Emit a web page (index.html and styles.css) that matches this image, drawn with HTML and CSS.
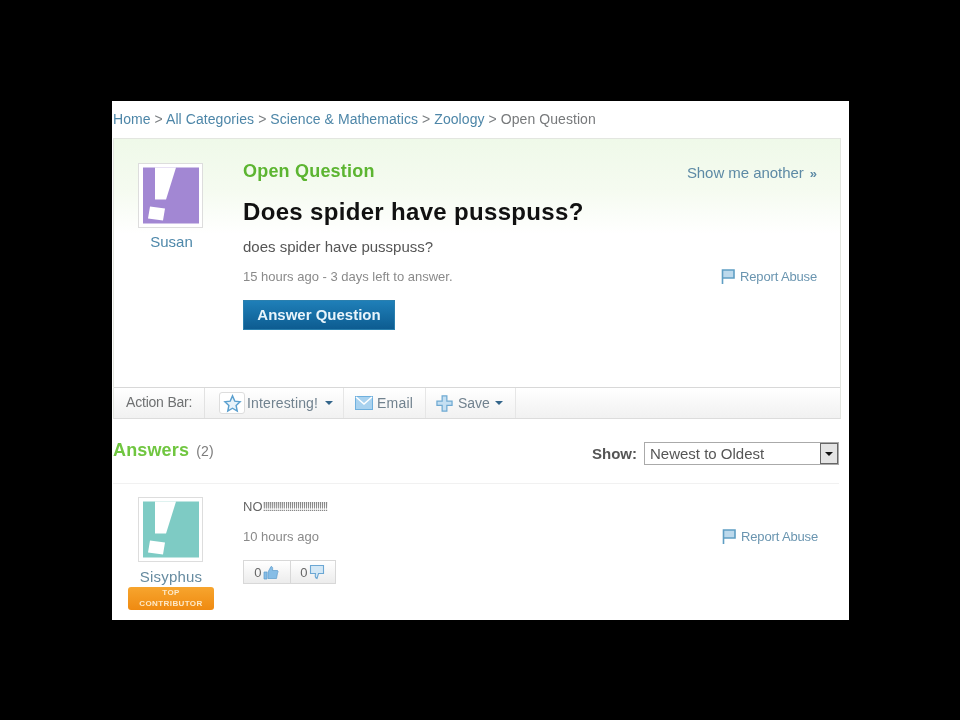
FILE: index.html
```html
<!DOCTYPE html>
<html lang="en">
<head>
<meta charset="utf-8">
<title>Does spider have pusspuss?</title>
<link rel="stylesheet" href="styles.css">
</head>
<body>
<main class="frame">
  <nav class="crumbs"><a>Home</a> &gt; <a>All Categories</a> &gt; <a>Science &amp; Mathematics</a> &gt; <a>Zoology</a> &gt; <span>Open Question</span></nav>

  <section class="qbox">
    <div class="qbody">
      <div class="user user-q">
        <div class="avatar">
          <svg viewBox="0 0 56 56" width="56" height="57"><rect width="56" height="56" fill="#a287d3"/><path d="M12 0H33L23 32H12Z" fill="#fff"/><path d="M7 39L22 41L20 53L5 51Z" fill="#fff"/></svg>
        </div>
        <a class="uname">Susan</a>
      </div>
      <div class="qmain">
        <div class="qtop"><h2 class="status">Open Question</h2><a class="another">Show me another <span class="chev">»</span></a></div>
        <h1 class="title">Does spider have pusspuss?</h1>
        <p class="desc">does spider have pusspuss?</p>
        <div class="metarow">
          <span class="meta">15 hours ago - 3 days left to answer.</span>
          <a class="report"><svg viewBox="0 0 14 15" width="14" height="15"><path d="M1.500 15V1H13V9H1.500" fill="#bcd9ec" stroke="#5f9ec4" stroke-width="1.600"/></svg>Report Abuse</a>
        </div>
        <a class="answer-btn">Answer Question</a>
      </div>
    </div>
    <div class="actionbar">
      <span class="ab-label">Action Bar:</span>
      <a class="ab-item ab-int"><span class="starbox"><svg viewBox="0 0 20 20" width="19" height="19"><path d="M10 2L12.400 7.500L18 8.200L13.800 12L15 18L10 15L5 18L6.200 12L2 8.200L7.600 7.500Z" fill="#e8f3fa" stroke="#5ba0cf" stroke-width="1.500"/></svg></span>Interesting!<i class="caret"></i></a>
      <a class="ab-item ab-email"><svg viewBox="0 0 18 14" width="18" height="14"><rect x=".5" y=".5" width="17" height="13" fill="#a9d2ef" stroke="#6fb0de"/><path d="M1 1L9 8L17 1" fill="none" stroke="#fff" stroke-width="1.500"/></svg>Email</a>
      <a class="ab-item ab-save"><svg viewBox="0 0 18 18" width="17" height="17"><path d="M6.500 1H11.500V6.500H17V11H11.500V17H6.500V11H1V6.500H6.500Z" fill="#c4dff2" stroke="#6ea9d2" stroke-width="1.300"/></svg>Save<i class="caret caret-save"></i></a>
    </div>
  </section>

  <header class="ans-head">
    <h2 class="ans-title">Answers <span class="count">(2)</span></h2>
    <div class="show">
      <label class="show-label">Show:</label>
      <div class="select"><span>Newest to Oldest</span><span class="sel-btn"><i class="sel-caret"></i></span></div>
    </div>
  </header>

  <article class="answer">
    <div class="user user-a">
      <div class="avatar avatar-a">
        <svg viewBox="0 0 56 56" width="56" height="57"><rect width="56" height="56" fill="#7ecbc4"/><path d="M12 0H33L23 32H12Z" fill="#fff"/><path d="M7 39L22 41L20 53L5 51Z" fill="#fff"/></svg>
      </div>
      <a class="uname uname-a">Sisyphus</a>
      <span class="badge">TOP<br>CONTRIBUTOR</span>
    </div>
    <div class="amain">
      <p class="atext">NO<span class="bangs">!!!!!!!!!!!!!!!!!!!!!!!!!!!!!!!!</span></p>
      <div class="metarow metarow-a">
        <span class="meta">10 hours ago</span>
        <a class="report"><svg viewBox="0 0 14 15" width="14" height="15"><path d="M1.500 15V1H13V9H1.500" fill="#bcd9ec" stroke="#5f9ec4" stroke-width="1.600"/></svg>Report Abuse</a>
      </div>
      <div class="votes">
        <span class="vote">0<svg viewBox="0 0 16 16" width="16" height="16"><path d="M1 8H4V15H1ZM5 8L8 2.500C9.500 2.500 10 3.500 9.500 6.500H14.500C15.500 7 15 8.500 14.500 9L13.500 14.500H5Z" fill="#86bde6" stroke="#5b9bcc" stroke-width=".7"/></svg></span>
        <span class="vote">0<svg viewBox="0 0 16 16" width="16" height="16"><path d="M1.500 1.500H14.500V9.500H9.500L8 14.500C6.500 14 6 12 6.500 9.500H1.500Z" fill="#d4e8f6" stroke="#6ba7d4" stroke-width="1.100"/></svg></span>
      </div>
    </div>
  </article>
</main>
</body>
</html>
```

FILE: styles.css
```css
* { box-sizing: border-box; }
html, body { margin: 0; height: 100%; }
body {
  background: #000;
  font-family: "Liberation Sans", Arial, sans-serif;
  overflow: hidden;
  padding: 101px 0 0 112px;
}
a { color: #4d86a8; text-decoration: none; }
p, h1, h2 { margin: 0; }

.frame {
  width: 737px;
  height: 519px;
  background: #fff;
  overflow: hidden;
  padding: 0 8px 0 1px;
  filter: blur(0.45px);
}

.crumbs {
  height: 37px;
  padding-top: 10px;
  font-size: 14px;
  line-height: 16px;
  letter-spacing: 0.07px;
  color: #7b7f82;
  white-space: nowrap;
}
.crumbs span { color: #77797b; }

.qbox {
  height: 281px;
  border: 1px solid #e3e6e0;
  border-bottom: 1px solid #dcdcdc;
  background: linear-gradient(#eff9e9 0, #f5fbf0 50px, #fff 95px);
  display: flex;
  flex-direction: column;
}
.qbody { flex: 1; display: flex; min-height: 0; }

.user { display: flex; flex-direction: column; align-items: center; flex: none; }
.user-q { width: 129px; padding: 24px 13px 0 0; }
.avatar {
  width: 65px;
  height: 65px;
  border: 1px solid #ddd;
  background: #fff;
  padding: 3px 3px 3px 4px;
  display: flex;
  margin-right: 4px;
}
.avatar-a { margin-right: 2px; }
.uname { font-size: 15px; line-height: 16px; margin-top: 6px; margin-left: -1px; color: #4e88aa; }

.qmain { flex: 1; padding: 20px 23px 0 0; min-width: 0; }
.qtop { display: flex; justify-content: space-between; align-items: center; height: 24px; }
.status { font-size: 18px; font-weight: bold; color: #5cb531; line-height: 24px; letter-spacing: 0.2px; }
.another { font-size: 15px; color: #5d8aa5; line-height: 18px; padding-top: 4px; letter-spacing: -0.05px; }
.chev { font-weight: bold; font-size: 13px; margin-left: 2px; }
.title { font-size: 24px; line-height: 30px; margin-top: 14px; color: #111; letter-spacing: 0.33px; }
.desc { font-size: 15px; line-height: 16px; margin-top: 12px; color: #555; }
.metarow { display: flex; justify-content: space-between; align-items: center; margin-top: 13px; height: 16px; }
.meta { font-size: 13px; color: #8a8a8a; }
.report { display: flex; align-items: center; gap: 5px; font-size: 13px; color: #6a95b0; letter-spacing: -0.15px; }
.answer-btn {
  display: block;
  width: 152px;
  height: 30px;
  margin-top: 16px;
  background: linear-gradient(#1f7fb8, #0d5c91);
  border: 1px solid #2a7fae;
  color: #e8f4fb;
  font-size: 15px;
  font-weight: bold;
  line-height: 28px;
  text-align: center;
}

.actionbar {
  height: 31px;
  flex: none;
  display: flex;
  align-items: stretch;
  background: linear-gradient(#fff, #f1f1f1);
  border-top: 1px solid #d8d8d8;
  font-size: 14px;
  color: #6a7a85;
}
.ab-label { width: 91px; padding-left: 12px; line-height: 29px; font-size: 14px; letter-spacing: -0.2px; color: #6f7172; border-right: 1px solid #e2e2e2; }
.ab-item { display: flex; align-items: center; border-right: 1px solid #e6e6e6; color: #71828f; }
.ab-int { width: 139px; padding-left: 14px; letter-spacing: 0.15px; }
.starbox { width: 26px; height: 22px; border: 1px solid #ddd; border-radius: 3px; background: #fff; display: flex; align-items: center; justify-content: center; margin-right: 2px; }
.caret { width: 0; height: 0; border: 4px solid transparent; border-top: 4px solid #33658a; border-bottom: 0; margin-left: 7px; }
.caret-save { margin-left: 0; }
.ab-email { width: 82px; padding-left: 11px; gap: 4px; letter-spacing: 0.2px; }
.ab-save { width: 90px; padding-left: 10px; gap: 5px; }

.ans-head { height: 65px; display: flex; justify-content: space-between; align-items: flex-start; padding-top: 20px; width: 726px; border-bottom: 1px solid #f1f1f1; }
.ans-title { font-size: 18px; line-height: 22px; color: #70c640; letter-spacing: 0.15px; }
.count { font-size: 14px; font-weight: normal; color: #7c7c7c; margin-left: 2px; }
.show { display: flex; align-items: center; gap: 7px; margin-top: 3px; }
.show-label { font-size: 15px; font-weight: bold; color: #555; }
.select { width: 195px; height: 23px; border: 1px solid #aaa; padding-left: 5px; font-size: 15px; line-height: 21px; color: #555; display: flex; justify-content: space-between; background: #fff; }
.sel-btn { width: 18px; height: 21px; background: #e4e4e4; border: 1px solid #666; display: flex; align-items: center; justify-content: center; }
.sel-caret { width: 0; height: 0; border: 4px solid transparent; border-top: 4px solid #111; border-bottom: 0; }

.answer { display: flex; padding-top: 13px; }
.user-a { width: 130px; padding-right: 14px; }
.uname-a { margin-top: 7px; margin-left: 0; letter-spacing: 0.2px; color: #668ba0; }
.badge {
  display: block;
  width: 86px;
  height: 23px;
  margin-top: 2px;
  border-radius: 3px;
  background: linear-gradient(#f7a52e, #ef8a11);
  color: #fde9c8;
  font-size: 8px;
  font-weight: bold;
  line-height: 11px;
  text-align: center;
  letter-spacing: 0.4px;
}
.amain { flex: 1; padding-right: 23px; min-width: 0; }
.atext { font-size: 13px; line-height: 16px; color: #666; margin-top: 2px; }
.bangs { letter-spacing: -1.6px; font-size: 13px; color: #888; }
.metarow-a { margin-top: 13px; }
.votes { display: inline-flex; height: 24px; margin-top: 16px; border: 1px solid #d8d8d8; background: linear-gradient(#fff, #ececec); }
.vote { width: 45.500px; display: flex; align-items: center; justify-content: center; gap: 2px; font-size: 13px; color: #666; }
.vote + .vote { border-left: 1px solid #d8d8d8; }
```
